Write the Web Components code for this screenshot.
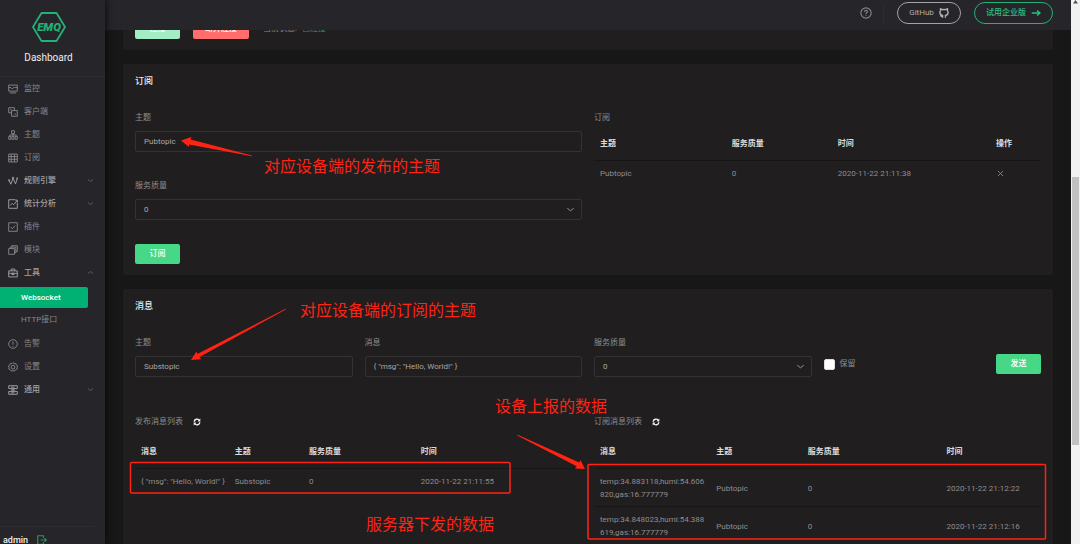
<!DOCTYPE html>
<html lang="zh-CN">
<head>
<meta charset="utf-8">
<title>EMQ Dashboard</title>
<style>
html,body{margin:0;height:100%;background:#171717}
body{font:8px/12px Roboto,"Noto Sans CJK SC",sans-serif;color:#8f8e8f;overflow:hidden}
</style>
</head>
<body>
<emq-app></emq-app>
<script>
const ICONS = {
  monitor:'<path d="M1 1.500h12v8.500H1zM1 5h3l2 2 3-3 1 1h3M2.500 12.500h9"/>',
  clients:'<path d="M5 8H1V1h8v4M5 5h8v8H5zM3 4h2M9 10h2"/>',
  topic:'<path d="M5 1h4v4H5zM1 9h3v4H1zM5.500 9h3v4h-3zM10 9h3v4h-3zM7 5v4M2.500 9V7h9v2"/>',
  subs:'<path d="M1 1.500h12v11H1zM1 5h12M1 8.800h12M4.500 1.500v11M9 1.500v11"/>',
  rule:'<path d="M1.500 6.500l2.500 5L7 3l3.500 8L13 4"/><circle cx="1.500" cy="6" r="1"/><circle cx="7" cy="2.500" r="1"/><circle cx="13" cy="3.500" r="1"/>',
  chart:'<path d="M10 1H1v12h12V5M3 9l3-3 2 2 5-6M10 1.500h3v3"/>',
  plugin:'<path d="M1 1h12v12H1zM4 7l2 2.500L10 5"/>',
  module:'<path d="M1 5h8v8H1zM3 5V3h8v8H9M5 3V1h8v8h-2"/>',
  tool:'<path d="M1 4h12v8.500H1zM4.500 4V1.500h5V4M1 7.500h12M7 6v4M5 9h4"/>',
  alert:'<circle cx="7" cy="7" r="6"/><path d="M7 3.500v4.500M7 9.500v1.200"/>',
  gear:'<path d="M7 .8l1.700 1.500 2.300-.3.600 2.200 1.900 1.300L12.700 7.500l.3 2.200-2.100.9L9.500 12.500 7 12.200 4.700 12.800 3.200 11 1.200 10l.2-2.300L.6 5.500l2-1.300L3.400 2l2.200.3z"/><circle cx="7" cy="7.300" r="2.600"/>',
  general:'<path d="M1 1h12v4H1zM1 9h12v4H1zM7 5v4M4 7h6M4 3h5M4 11h5"/>',
  down:'<path d="M2 5l5 4 5-4"/>',
  up:'<path d="M2 9l5-4 5 4"/>',
  help:'<circle cx="7" cy="7" r="6"/><path d="M5.300 5.600q0-1.800 1.700-1.800t1.700 1.500q0 1-1.700 2v.8M7 9.500v1"/>',
  logout:'<path d="M9 4V1H1v12h8v-3M5 7h8M10.500 4.500L13 7l-2.500 2.500" stroke-width="1.600"/>',
  arrow:'<path d="M1 7h11M8.500 3.500L12.500 7 8.500 10.500" stroke-width="2"/>',
  close:'<path d="M3 3l8 8M11 3l-8 8"/>',
  refresh:'<path d="M2 6.500A5 5 0 0 1 11 4M12 7.500A5 5 0 0 1 3 10" stroke-width="2.400"/><path d="M12.800 1v5H8zM1.200 13V8H6z" fill="currentColor" stroke="none"/>',
  github:'<path d="M5 13.500v-3c-2.200-.5-3.700-1.700-3.700-4.200 0-1 .3-1.900.9-2.600V1.200L5 2.300a8 8 0 0 1 4 0l2.800-1.100v2.500c.6.7.9 1.600.9 2.600 0 2.500-1.500 3.700-3.700 4.200v3M5 12c-1.600.3-2.400-.7-3.200-1.700" stroke-width="2"/>'
};

function define(name, render, ready) {
  customElements.define(name, class extends HTMLElement {
    connectedCallback() {
      if (this.shadowRoot) return;
      const t = document.createElement('template');
      t.innerHTML = render(k => this.getAttribute(k) || '', this);
      this.attachShadow({mode:'open'}).append(t.content.cloneNode(true));
      if (ready) ready(this);
    }
  });
}

define('emq-icon', a => `<style>
:host{display:block;width:10px;height:10px;flex:none}
svg{display:block;width:100%;height:100%;fill:none;stroke:currentColor;stroke-width:1.3}
</style><svg viewBox="0 0 14 14" aria-hidden="true">${ICONS[a('name')]}</svg>`);

define('emq-menu-item', a => `<style>
:host{display:block}
a{display:flex;align-items:center;gap:6px;height:23px;padding:0 9px 0 8px;color:#88878b;text-decoration:none}
span{flex:1}
:host([arrow]) a{color:#a3a2a6;font-weight:500}
.arrow{width:7px;height:7px;margin-right:2px;color:#77767a}
:host([sub]) a{padding-left:21px}
:host([active]) a{height:21px;margin:3px 17px 0 0;background:#00b173;color:#fff;font-weight:500;border-radius:0 2px 2px 0}
</style><a href="#">${a('icon') ? `<emq-icon name="${a('icon')}"></emq-icon>` : ''}<span><slot></slot></span>${a('arrow') ? `<emq-icon class="arrow" name="${a('arrow')}"></emq-icon>` : ''}</a>`);

define('emq-sidebar', () => `<style>
:host{display:flex;flex-direction:column;width:105px;flex:none;background:#26252a;box-shadow:1px 0 6px #0b0b0b;z-index:3}
.brand{box-sizing:border-box;height:77px;padding-top:11px;display:flex;flex-direction:column;align-items:center;gap:7px;padding-right:8px;border-bottom:1px solid #2d2c31;color:#eee;font-size:10px;line-height:16px}
.brand svg{width:34px;height:32px}
nav{flex:1}
.group{margin-top:1px}
footer{display:flex;align-items:center;gap:9px;height:26px;margin:0 11px -9px 0;padding-left:3px;border-top:1px solid #2d2c31;color:#eee;font-size:9px;font-weight:500}
footer a{color:#219a5c}
</style>
<div class="brand"><svg viewBox="0 0 34 32"><path d="M9.500 2h15L33 16l-8.500 14h-15L1 16z" fill="none" stroke="#23b177" stroke-width="1.800" stroke-linejoin="round"/><text x="17" y="20" text-anchor="middle" fill="#23b177" font-family="Roboto" font-size="11.500" font-weight="900" font-style="italic">EMQ</text></svg><span>Dashboard</span></div>
<nav>
<emq-menu-item icon="monitor">监控</emq-menu-item>
<emq-menu-item icon="clients">客户端</emq-menu-item>
<emq-menu-item icon="topic">主题</emq-menu-item>
<emq-menu-item icon="subs">订阅</emq-menu-item>
<emq-menu-item icon="rule" arrow="down">规则引擎</emq-menu-item>
<emq-menu-item icon="chart" arrow="down">统计分析</emq-menu-item>
<emq-menu-item icon="plugin">插件</emq-menu-item>
<emq-menu-item icon="module">模块</emq-menu-item>
<emq-menu-item icon="tool" arrow="up">工具</emq-menu-item>
<emq-menu-item sub active>Websocket</emq-menu-item>
<emq-menu-item sub>HTTP接口</emq-menu-item>
<div class="group">
<emq-menu-item icon="alert">告警</emq-menu-item>
<emq-menu-item icon="gear">设置</emq-menu-item>
<emq-menu-item icon="general" arrow="down">通用</emq-menu-item>
</div>
</nav>
<footer><span>admin</span><a href="#" aria-label="logout"><emq-icon name="logout"></emq-icon></a></footer>`);

define('emq-topbar', () => `<style>
:host{display:flex;align-items:center;justify-content:flex-end;height:30px;flex:none;box-sizing:border-box;padding:0 18px 4px 0;background:#26252a;z-index:2}
.help{width:12px;height:12px;color:#88878b}
i{width:1px;height:20px;background:#2d2c31;margin:0 13px 0 11px}
a{box-sizing:border-box;display:flex;align-items:center;justify-content:center;gap:5px;height:22px;border:1px solid #a3a2a6;border-radius:11px;color:#b1b0b3;text-decoration:none;width:64px}
a.trial{width:79px;margin-left:13px;border-color:#23b177;color:#2bbf80;font-weight:500}
</style><emq-icon class="help" name="help"></emq-icon><i></i><a href="#">GitHub<emq-icon name="github"></emq-icon></a><a class="trial" href="#">试用企业版<emq-icon name="arrow"></emq-icon></a>`);

define('emq-button', a => `<style>
:host{display:block}
button{display:block;height:20px;min-width:45px;padding:0 12px;border:0;border-radius:2px;background:#46d887;color:#fff;font:inherit;font-weight:500}
:host([kind=soft]) button{background:#a2edc3}
:host([kind=danger]) button{background:#ff6d6d}
</style><button type="button"><slot></slot></button>`);

define('emq-field', a => `<style>
:host{display:flex;flex-direction:column;gap:7px;min-width:0}
.box{position:relative;display:block}
input,select{appearance:none;box-sizing:border-box;display:block;width:100%;height:21px;margin:0;padding:0 8px;border:1px solid #343334;border-radius:2px;background:transparent;color:#a9a8a9;font:inherit;outline:0}
emq-icon{position:absolute;right:7px;top:6px;width:9px;height:9px;color:#a9a8a9;pointer-events:none}
</style><label for="f">${a('label')}</label><span class="box">${a('type') === 'select' ? '<select id="f"><option>0</option><option>1</option><option>2</option></select><emq-icon name="down"></emq-icon>' : '<input id="f" type="text">'}</span>`,
el => { const i = el.shadowRoot.querySelector('input'); if (i) i.value = el.getAttribute('value'); });

define('emq-check', a => `<style>
:host{display:block}
label{display:flex;align-items:center;gap:5px}
input{appearance:none;box-sizing:border-box;width:11px;height:11px;margin:0;border:1px solid #ddd;border-radius:2px;background:#fff}
</style><label><input type="checkbox"><slot></slot></label>`);

define('emq-card', a => `<style>
:host{display:block;padding:9px 12px 11px;background:#201e1f;border-radius:2px}
h2{margin:0 0 23px;font-size:9px;line-height:16px;font-weight:500;color:#eee}
</style>${a('heading') ? `<h2>${a('heading')}</h2>` : ''}<slot></slot>`);

define('emq-table', a => {
  const cell = v => v === 'x' ? '<button type="button" aria-label="close"><emq-icon name="close"></emq-icon></button>' : v;
  return `<style>
:host{display:block}
table{width:100%;table-layout:fixed;border-collapse:separate;border-spacing:0;line-height:13px}
th,td{padding:6px 2px 6px 6px;text-align:left;border-bottom:1px solid #171617;word-break:break-all;font-weight:400}
th{padding-bottom:10px;color:#dcdbdc;font-weight:700}
td{padding-bottom:5px}
:host([plain]) tr:last-child td{border-bottom-color:transparent}
button{display:block;padding:0;border:0;background:none;color:inherit}
emq-icon{width:9px;height:9px}
</style><table><colgroup>${a('widths').split(',').map(w => `<col style="width:${w}%">`).join('')}</colgroup>
<thead><tr>${a('cols').split('|').map(c => `<th>${c}</th>`).join('')}</tr></thead>
<tbody>${a('rows').split(';').map(r => `<tr>${r.split('|').map(c => `<td>${cell(c)}</td>`).join('')}</tr>`).join('')}</tbody></table>`;
});

define('emq-list-title', () => `<style>
:host{display:flex;align-items:center;gap:10px;height:20px}
emq-icon{width:8px;height:8px;color:#f4f4f4}
</style><span><slot></slot></span><emq-icon name="refresh"></emq-icon>`);

define('emq-scrollbar', () => `<style>
:host{display:flex;flex-direction:column;align-items:center;width:9px;flex:none;background:#f1f1f1}
svg{width:7px;height:5px;flex:none}
.before{flex:172}
.thumb{flex:268;width:7px;background:#c1c1c1}
.after{flex:99}
</style><svg viewBox="0 0 7 5"><path d="M1 3.500L3.500 0 6 3.500z" fill="#505050"/></svg><div class="before"></div><div class="thumb"></div><div class="after"></div>`);

/* Red notes, arrows and frames laid over the page. */
define('emq-notes', () => `<style>
:host{position:absolute;inset:0;overflow:hidden;pointer-events:none;z-index:5;color:#ff2313;font-size:16px;line-height:20px;white-space:nowrap}
svg{position:absolute;left:0;top:0;width:1080px;height:544px}
span{position:absolute}
</style><svg viewBox="0 0 1080 544"><g fill="none" stroke="#ff2313" stroke-width="1.500"><rect x="130.500" y="462.500" width="379.500" height="30.500" rx="1"/><rect x="588" y="464.500" width="457.500" height="74.500" rx="1"/></g>
<g fill="#ff2313"><path d="M181 140.500L191.500 137l-1 2.500L252 155.500v.8L189 144.500l0 2.500z"/><path d="M191 360l5.500-8.500.8 2.500L285.500 308.800l.4.800L199.500 357l1.800 2.200z"/><path d="M585 469l-10-.5 1.600-2.200L517.200 435.500l.5-.8 61.600 27.700 1.200-2.400z"/></g></svg>
<span style="left:264px;top:157px">对应设备端的发布的主题</span>
<span style="left:300px;top:301px">对应设备端的订阅的主题</span>
<span style="left:495px;top:397px">设备上报的数据</span>
<span style="left:366px;top:515px">服务器下发的数据</span>`);

define('emq-app', () => `<style>
:host{display:flex;position:relative;height:100vh;overflow:hidden}
main{flex:1;min-width:0;display:flex;flex-direction:column}
.content{flex:1;min-height:0;overflow:hidden;padding:0 18px}
.stack{display:flex;flex-direction:column;gap:14px;margin-top:-20px}
.row{display:flex;align-items:center;gap:13px}
.row p{margin:0 0 0 1px;display:flex;gap:5px}
.row b{color:#219a5c;font-weight:400}
.two{display:grid;grid-template-columns:1fr 1fr;gap:12px}
.four{display:grid;grid-template-columns:repeat(4,1fr);gap:12px;margin-bottom:35px}
.fields{display:flex;flex-direction:column;gap:28px}
.fields emq-button{margin-top:-4px}
.panel{display:flex;flex-direction:column;gap:7px;min-width:0}
.actions{display:flex;justify-content:space-between;align-items:center;height:20px;margin-top:17px}
</style>
<emq-sidebar></emq-sidebar>
<main><emq-topbar></emq-topbar>
<div class="content"><div class="stack">
<emq-card><div class="row"><emq-button kind="soft">连接</emq-button><emq-button kind="danger">断开连接</emq-button><p><span>当前状态:</span><b>已连接</b></p></div></emq-card>
<emq-card heading="订阅"><div class="two">
<div class="fields"><emq-field label="主题" value="Pubtopic"></emq-field><emq-field label="服务质量" type="select"></emq-field><emq-button>订阅</emq-button></div>
<div class="panel"><span>订阅</span><emq-table widths="29.500,23.700,35.400,11.400" cols="主题|服务质量|时间|操作" rows="Pubtopic|0|2020-11-22 21:11:38|x" plain></emq-table></div>
</div></emq-card>
<emq-card heading="消息"><div class="four">
<emq-field label="主题" value="Substopic"></emq-field>
<emq-field label="消息" value='{ "msg": "Hello, World!" }'></emq-field>
<emq-field label="服务质量" type="select"></emq-field>
<div class="actions"><emq-check>保留</emq-check><emq-button>发送</emq-button></div></div>
<div class="two">
<div class="panel"><emq-list-title>发布消息列表</emq-list-title><emq-table widths="21,16.600,25,37.400" cols="消息|主题|服务质量|时间" rows='{ &quot;msg&quot;: &quot;Hello, World!&quot; }|Substopic|0|2020-11-22 21:11:55' plain></emq-table></div>
<div class="panel"><emq-list-title>订阅消息列表</emq-list-title><emq-table widths="26,20.500,31,22.500" cols="消息|主题|服务质量|时间" rows="temp:34.883118,humi:54.606820,gas:16.777779|Pubtopic|0|2020-11-22 21:12:22;temp:34.848023,humi:54.388619,gas:16.777779|Pubtopic|0|2020-11-22 21:12:16"></emq-table></div>
</div></emq-card>
</div></div></main>
<emq-scrollbar></emq-scrollbar>
<emq-notes></emq-notes>`);
</script>
</body>
</html>
